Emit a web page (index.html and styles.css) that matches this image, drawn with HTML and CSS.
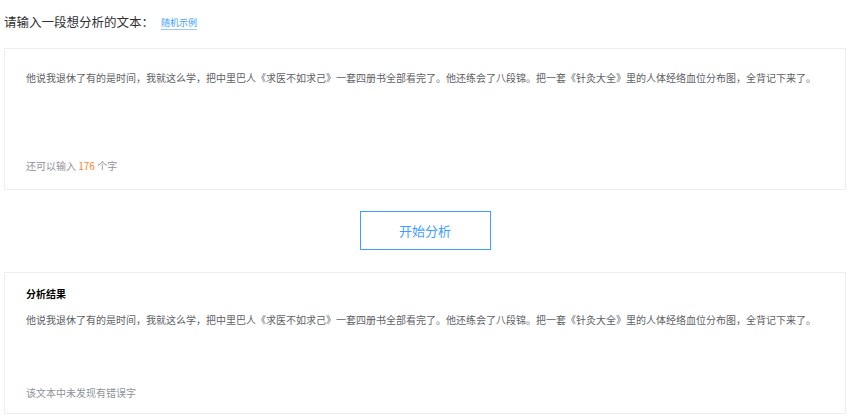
FILE: index.html
```html
<!DOCTYPE html>
<html lang="zh-CN">

<head>
    <meta charset="UTF-8">
    <meta name="viewport" content="width=device-width, initial-scale=1.0">
    <title>文本纠错</title>
    <link rel="stylesheet" href="styles.css">
</head>

<body>
    <div class="cabecalho">
        <h1 class="titulo">请输入一段想分析的文本：</h1>
        <a class="exemplo" href="#">随机示例</a>
    </div>

    <div class="caixa caixa-entrada">
        <p class="texto-entrada">他说我退休了有的是时间，我就这么学，把中里巴人《求医不如求己》一套四册书全部看完了。他还练会了八段锦。把一套《针灸大全》里的人体经络血位分布图，全背记下来了。</p>
        <p class="contador">还可以输入 <span class="numero">176</span> 个字</p>
    </div>

    <div class="acoes">
        <button class="botao-analisar">开始分析</button>
    </div>

    <div class="caixa caixa-resultado">
        <h2 class="resultado-titulo">分析结果</h2>
        <p class="resultado-texto">他说我退休了有的是时间，我就这么学，把中里巴人《求医不如求己》一套四册书全部看完了。他还练会了八段锦。把一套《针灸大全》里的人体经络血位分布图，全背记下来了。</p>
        <p class="resultado-info">该文本中未发现有错误字</p>
    </div>
</body>

</html>
```

FILE: styles.css
```css
* {
    margin: 0px;
    padding: 0px;
    box-sizing: border-box;
}

body {
    background-color: #fff;
    padding: 0 4px;
    font-family: "Noto Sans CJK SC", "Liberation Sans", sans-serif;
    color: #606266;
}

.cabecalho {
    display: flex;
    align-items: center;
    height: 48px;
    padding-bottom: 4px;
}

.titulo {
    font-size: 12.5px;
    line-height: 16px;
    font-weight: normal;
    color: #303133;
}

.exemplo {
    margin-left: 7px;
    font-size: 9px;
    line-height: 12px;
    color: #409eff;
    text-decoration: none;
    border-bottom: 1px solid #9cc8f7;
    margin-top: 2px;
}

.caixa {
    border: 1px solid #ebeef5;
    padding: 0 21px;
}

.caixa-entrada {
    height: 142px;
    padding-top: 22px;
    padding-bottom: 16px;
    display: flex;
    flex-direction: column;
    justify-content: space-between;
}

.texto-entrada,
.resultado-texto {
    font-size: 10px;
    line-height: 14px;
    color: #606266;
}

.contador,
.resultado-info {
    font-size: 10px;
    line-height: 14px;
    color: #909399;
}

.numero {
    color: #ff7f2a;
}

.acoes {
    display: flex;
    justify-content: center;
    padding: 21px 0 22px;
}

.botao-analisar {
    width: 131px;
    height: 39px;
    background: #fff;
    border: 1px solid #409eff;
    color: #409eff;
    font-family: inherit;
    font-size: 13px;
}

.caixa-resultado {
    height: 142px;
    padding-top: 14px;
    padding-bottom: 13px;
    display: flex;
    flex-direction: column;
}

.resultado-titulo {
    font-size: 10px;
    line-height: 14px;
    font-weight: bold;
    color: #000;
}

.resultado-texto {
    margin-top: 12px;
}

.resultado-info {
    margin-top: auto;
}
```
